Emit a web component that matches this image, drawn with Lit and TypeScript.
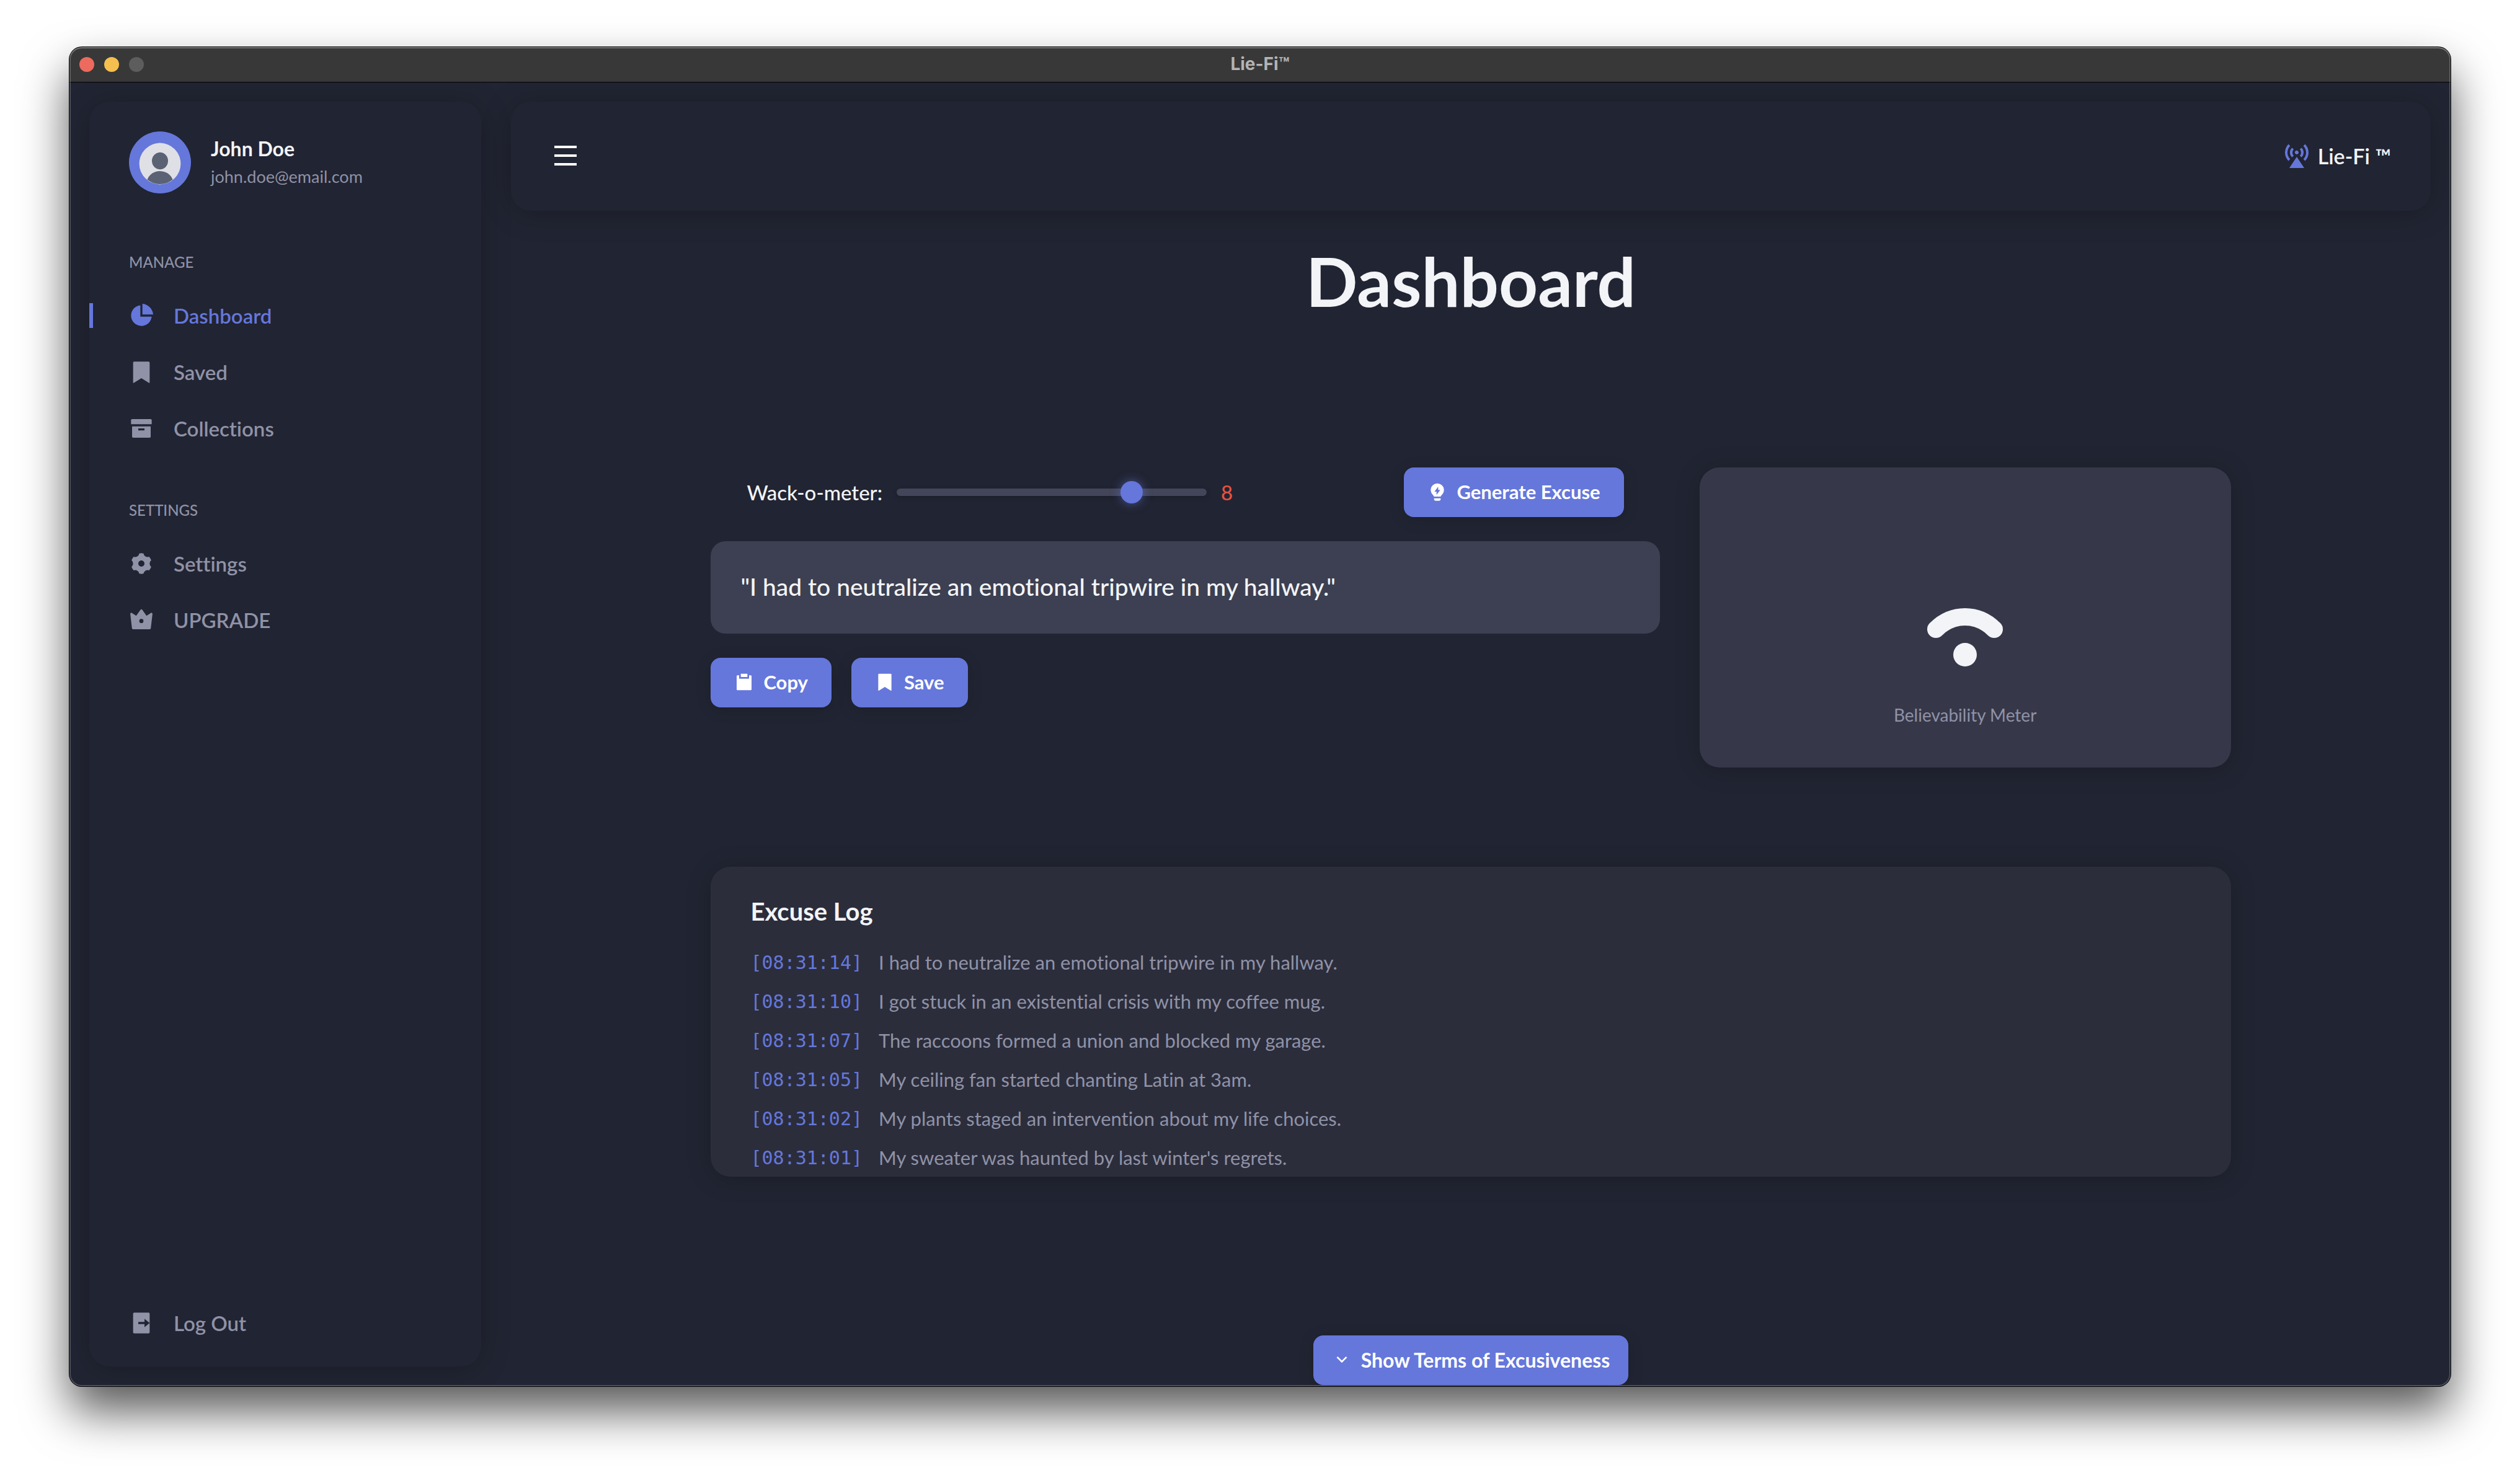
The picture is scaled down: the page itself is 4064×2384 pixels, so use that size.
import { LitElement, html, css, svg } from "lit";
import { customElement, property, state } from "lit/decorators.js";
import { classMap } from "lit/directives/class-map.js";

const ICONS: Record<string, string> = {
  dashboard:
    "M11 2.05V13h10.95c-.501 5.053-4.765 9-9.95 9-5.523 0-10-4.477-10-10 0-5.185 3.947-9.449 9-9.95zm2-1.507C18.553 1.02 22.979 5.447 23.457 11H13V.543z",
  bookmark:
    "M5 2h14a1 1 0 0 1 1 1v19.143a.5.5 0 0 1-.766.424L12 18.03l-7.234 4.536A.5.5 0 0 1 4 22.143V3a1 1 0 0 1 1-1z",
  archive:
    "M3 10h18v10.004c0 .55-.445.996-.993.996H3.993A.994.994 0 0 1 3 20.004V10zm6 2v2h6v-2H9zM2 4c0-.552.455-1 .992-1h18.016c.548 0 .992.444.992 1v4H2V4z",
  settings:
    "M9.954 2.21a9.99 9.99 0 0 1 4.091-.002A3.993 3.993 0 0 0 16 5.07a3.993 3.993 0 0 0 3.457.261A9.99 9.99 0 0 1 21.5 8.876 3.993 3.993 0 0 0 20 12c0 1.264.586 2.391 1.502 3.124a10.043 10.043 0 0 1-2.046 3.543 3.993 3.993 0 0 0-3.456.261 3.993 3.993 0 0 0-1.954 2.86 9.99 9.99 0 0 1-4.091.004A3.993 3.993 0 0 0 8 18.927a3.993 3.993 0 0 0-3.457-.26A9.99 9.99 0 0 1 2.5 15.121 3.993 3.993 0 0 0 4 12a3.993 3.993 0 0 0-1.502-3.124 10.043 10.043 0 0 1 2.046-3.543A3.993 3.993 0 0 0 8 5.071a3.993 3.993 0 0 0 1.954-2.86zM12 15a3 3 0 1 0 0-6 3 3 0 0 0 0 6z",
  crown:
    "M2.8 5.2L7 8l4.186-5.86a1 1 0 0 1 1.628 0L17 8l4.2-2.8a1 1 0 0 1 1.547.95l-1.643 13.967a1 1 0 0 1-.993.883H3.889a1 1 0 0 1-.993-.883L1.253 6.149A1 1 0 0 1 2.8 5.2zM12 15a2 2 0 1 0 0-4 2 2 0 0 0 0 4z",
  logout:
    "M5 22a1 1 0 0 1-1-1V3a1 1 0 0 1 1-1h14a1 1 0 0 1 1 1v18a1 1 0 0 1-1 1H5zm10-6l5-4-5-4v3H9v2h6v3z",
  menu: "M3 4h18v2H3V4zm0 7h18v2H3v-2zm0 7h18v2H3v-2z",
  station:
    "M12 13l6 9H6l6-9zm-1.06-2.44a1.5 1.5 0 1 1 2.12-2.12 1.5 1.5 0 0 1-2.12 2.12zM5.281 2.783l1.415 1.415a7.5 7.5 0 0 0 0 10.606l-1.415 1.415a9.5 9.5 0 0 1 0-13.436zm13.436 0a9.5 9.5 0 0 1 0 13.436l-1.415-1.415a7.5 7.5 0 0 0 0-10.606l1.415-1.415zM8.11 5.611l1.414 1.414a3.5 3.5 0 0 0 0 4.95l-1.414 1.414a5.5 5.5 0 0 1 0-7.778zm7.778 0a5.5 5.5 0 0 1 0 7.778l-1.414-1.414a3.5 3.5 0 0 0 0-4.95l1.414-1.414z",
  bulb:
    "M7.941 18c-.297-1.273-1.637-2.314-2.187-3a8 8 0 1 1 12.49.002c-.55.685-1.888 1.726-2.185 2.998H7.94zM16 20v1a2 2 0 0 1-2 2h-4a2 2 0 0 1-2-2v-1h8zm-3-9.995V6l-4.5 6.005H11v4l4.5-6H13z",
  clipboard:
    "M6 4v4h12V4h2.007c.548 0 .993.445.993.993v16.014a.994.994 0 0 1-.993.993H3.993A.994.994 0 0 1 3 21.007V4.993C3 4.445 3.445 4 3.993 4H6zm2-2h8v4H8V2z",
  chevron:
    "M12 13.172l4.95-4.95 1.414 1.414L12 16 5.636 9.636 7.05 8.222z",
};

@customElement("lf-icon")
class LfIcon extends LitElement {
  @property() name = "menu";

  static styles = css`
    :host {
      display: block;
      flex: none;
      width: 40px;
      height: 40px;
    }
    .glyph {
      display: block;
      width: 100%;
      height: 100%;
      fill: currentColor;
    }
  `;

  render() {
    return html`<svg class="glyph" viewBox="0 0 24 24" aria-hidden="true">
      ${svg`<path d=${ICONS[this.name]}></path>`}
    </svg>`;
  }
}

interface NavItem {
  icon: string;
  label: string;
}

@customElement("lf-sidebar")
class LfSidebar extends LitElement {
  @state() private active = "Dashboard";

  private sections: { title: string; items: NavItem[] }[] = [
    {
      title: "MANAGE",
      items: [
        { icon: "dashboard", label: "Dashboard" },
        { icon: "bookmark", label: "Saved" },
        { icon: "archive", label: "Collections" },
      ],
    },
    {
      title: "SETTINGS",
      items: [
        { icon: "settings", label: "Settings" },
        { icon: "crown", label: "UPGRADE" },
      ],
    },
  ];

  static styles = css`
    :host {
      display: flex;
      flex-direction: column;
      box-sizing: border-box;
      padding: 48px 0 24px;
      border-radius: 32px;
      background: #212432;
      box-shadow: 0 4px 48px rgba(0, 0, 0, 0.22);
      color: #9092a7;
    }
    .profile {
      display: flex;
      align-items: center;
      gap: 32px;
      padding: 0 64px;
    }
    .avatar {
      display: block;
      width: 100px;
      height: 100px;
    }
    .name {
      margin: 0;
      font-size: 32px;
      line-height: 46px;
      font-weight: 700;
      color: #f3f4f7;
    }
    .email {
      margin: 0;
      font-size: 27px;
      line-height: 44px;
    }
    .nav {
      display: flex;
      flex-direction: column;
      gap: 70px;
      margin-top: 95px;
    }
    .heading {
      margin: 0 64px 25px;
      font-size: 24px;
      line-height: 32px;
      font-weight: 500;
    }
    .list {
      margin: 0;
      padding: 0;
      list-style: none;
    }
    .item {
      display: flex;
      align-items: center;
      box-sizing: border-box;
      height: 91px;
      padding-bottom: 2px;
      color: inherit;
      font-size: 33px;
      font-weight: 600;
      text-decoration: none;
    }
    .item::before {
      content: "";
      width: 6px;
      height: 40px;
      margin-right: 58px;
    }
    .item.active {
      color: #6577db;
    }
    .item.active::before {
      background: #6577db;
    }
    .item lf-icon {
      margin-right: 32px;
    }
    .logout {
      margin-top: auto;
    }
  `;

  private select(event: Event, label: string) {
    event.preventDefault();
    this.active = label;
  }

  render() {
    return html`
      <div class="profile">
        <svg class="avatar" viewBox="0 0 100 100" role="img" aria-label="Profile picture">
          <defs>
            <clipPath id="face"><circle cx="50" cy="52" r="33"></circle></clipPath>
          </defs>
          <circle cx="50" cy="50" r="50" fill="#6577db"></circle>
          <circle cx="50" cy="52" r="33.4" fill="#dfe0e6"></circle>
          <g clip-path="url(#face)" fill="#5a6273">
            <ellipse cx="50" cy="47.5" rx="13" ry="13.7"></ellipse>
            <ellipse cx="50" cy="84" rx="21.5" ry="20"></ellipse>
          </g>
        </svg>
        <div>
          <p class="name">John Doe</p>
          <p class="email">john.doe@email.com</p>
        </div>
      </div>
      <nav class="nav">
        ${this.sections.map(
          (section) => html`<section>
            <h2 class="heading">${section.title}</h2>
            <ul class="list">
              ${section.items.map(
                (item) => html`<li>
                  <a
                    class=${classMap({ item: true, active: item.label === this.active })}
                    href="#${item.label.toLowerCase()}"
                    @click=${(e: Event) => this.select(e, item.label)}
                    ><lf-icon name=${item.icon}></lf-icon>${item.label}</a
                  >
                </li>`
              )}
            </ul>
          </section>`
        )}
      </nav>
      <a class="item logout" href="#logout"><lf-icon name="logout"></lf-icon>Log Out</a>
    `;
  }
}

@customElement("lf-button")
class LfButton extends LitElement {
  @property() icon = "";

  static styles = css`
    :host {
      display: block;
    }
    .button {
      display: flex;
      align-items: center;
      gap: 15px;
      height: 80px;
      padding: 0 38px 2px;
      border: 0;
      border-radius: 16px;
      background: #6577db;
      box-shadow: 0 4px 24px rgba(0, 0, 0, 0.15);
      color: #ffffff;
      font: inherit;
      font-size: 31px;
      font-weight: 700;
      white-space: nowrap;
      cursor: pointer;
    }
    .button lf-icon {
      width: 32px;
      height: 32px;
    }
    :host([wide]) .button {
      padding: 0 30px 2px;
      font-size: 32px;
    }
  `;

  render() {
    return html`<button class="button" type="button">
      <lf-icon name=${this.icon}></lf-icon><slot></slot>
    </button>`;
  }
}

@customElement("lf-dashboard")
class LfDashboard extends LitElement {
  @state() private level = 8;

  private log = [
    { time: "08:31:14", text: "I had to neutralize an emotional tripwire in my hallway." },
    { time: "08:31:10", text: "I got stuck in an existential crisis with my coffee mug." },
    { time: "08:31:07", text: "The raccoons formed a union and blocked my garage." },
    { time: "08:31:05", text: "My ceiling fan started chanting Latin at 3am." },
    { time: "08:31:02", text: "My plants staged an intervention about my life choices." },
    { time: "08:31:01", text: "My sweater was haunted by last winter's regrets." },
  ];

  static styles = css`
    :host {
      display: flex;
      flex-direction: column;
      align-items: center;
      padding: 48px 16px 0;
      color: #f3f4f7;
    }
    .title {
      margin: 0;
      font-size: 110px;
      line-height: 128px;
      font-weight: 700;
    }
    .column {
      width: 80%;
      margin-top: 238px;
    }
    .top {
      display: grid;
      grid-template-columns: 25fr 14fr;
      gap: 64px;
      align-items: start;
    }
    .maker {
      display: flex;
      flex-direction: column;
      gap: 39px;
    }
    .controls {
      display: flex;
      align-items: center;
      justify-content: space-between;
      padding: 0 58px;
    }
    .wack {
      display: flex;
      align-items: center;
      gap: 23px;
      font-size: 33px;
      font-weight: 500;
    }
    .slider {
      appearance: none;
      width: 500px;
      height: 36px;
      margin: 0;
      background: transparent;
    }
    .slider::-webkit-slider-runnable-track {
      height: 12px;
      border-radius: 6px;
      background: #434659;
      box-shadow: 0 2px 8px rgba(0, 0, 0, 0.2);
    }
    .slider::-webkit-slider-thumb {
      appearance: none;
      width: 36px;
      height: 36px;
      margin-top: -12px;
      border-radius: 50%;
      background: #6577db;
      box-shadow: 0 0 16px rgba(101, 119, 219, 0.6);
    }
    .level {
      color: #e5513f;
    }
    .quote {
      display: flex;
      align-items: center;
      box-sizing: border-box;
      min-height: 149px;
      margin: 0;
      padding: 0 48px 4px;
      border-radius: 24px;
      background: #3c4052;
      font-size: 39px;
      font-weight: 500;
    }
    .actions {
      display: flex;
      gap: 32px;
    }
    .meter {
      display: flex;
      flex-direction: column;
      align-items: center;
      justify-content: flex-end;
      gap: 50px;
      box-sizing: border-box;
      height: 484px;
      padding-bottom: 65px;
      border-radius: 32px;
      background: #363849;
      box-shadow: 0 4px 40px rgba(0, 0, 0, 0.2);
      font-size: 28px;
      line-height: 40px;
      color: #9092a7;
    }
    .wifi {
      display: block;
      width: 128px;
      height: 112px;
    }
    .log {
      box-sizing: border-box;
      height: 500px;
      margin-top: 160px;
      padding: 48px 64px 0;
      border-radius: 32px;
      overflow: hidden;
      background: #2b2d3b;
      box-shadow: 0 4px 40px rgba(0, 0, 0, 0.2);
    }
    .log-title {
      margin: 0;
      font-size: 40px;
      line-height: 48px;
      font-weight: 700;
    }
    .entries {
      margin: 27px 0 0;
      padding: 0;
      list-style: none;
    }
    .entry {
      display: flex;
      align-items: center;
      gap: 26px;
      font-size: 31px;
      line-height: 63px;
      color: #9092a7;
    }
    .time {
      font-family: "DejaVu Sans Mono", monospace;
      font-size: 30px;
      color: #6577db;
    }
    .terms {
      margin-top: 256px;
    }
  `;

  render() {
    return html`
      <h1 class="title">Dashboard</h1>
      <div class="column">
        <div class="top">
          <section class="maker">
            <div class="controls">
              <div class="wack">
                <label for="wack">Wack-o-meter:</label>
                <input
                  class="slider"
                  id="wack"
                  type="range"
                  min="1"
                  max="10"
                  .value=${String(this.level)}
                  @input=${(e: Event) =>
                    (this.level = Number((e.target as HTMLInputElement).value))}
                />
                <output class="level" for="wack">${this.level}</output>
              </div>
              <lf-button icon="bulb">Generate Excuse</lf-button>
            </div>
            <p class="quote">"${this.log[0].text}"</p>
            <div class="actions">
              <lf-button icon="clipboard">Copy</lf-button>
              <lf-button icon="bookmark">Save</lf-button>
            </div>
          </section>
          <section class="meter">
            <svg class="wifi" viewBox="0 0 128 112" aria-hidden="true">
              <path
                d="M17 44C30 31 46 24 64 24s34 7 47 20"
                fill="none"
                stroke="#f3f4f7"
                stroke-width="28"
                stroke-linecap="round"
              ></path>
              <circle cx="64" cy="85" r="19" fill="#f3f4f7"></circle>
            </svg>
            <span>Believability Meter</span>
          </section>
        </div>
        <section class="log">
          <h2 class="log-title">Excuse Log</h2>
          <ol class="entries">
            ${this.log.map(
              (entry) => html`<li class="entry">
                <time class="time">[${entry.time}]</time><span>${entry.text}</span>
              </li>`
            )}
          </ol>
        </section>
      </div>
      <lf-button class="terms" icon="chevron" wide>Show Terms of Excusiveness</lf-button>
    `;
  }
}

@customElement("app-root")
class AppRoot extends LitElement {
  static styles = css`
    :host {
      display: flex;
      box-sizing: border-box;
      min-height: 100vh;
      padding: 76px 112px 148px;
      background: #ffffff;
      font-family: Lato, "Open Sans", sans-serif;
      font-variant-ligatures: none;
    }
    .window {
      position: relative;
      display: flex;
      flex: 1;
      flex-direction: column;
      min-width: 0;
      border-radius: 20px;
      background: #212432;
      box-shadow: 0 0 0 1px #000000, 0 40px 76px rgba(0, 0, 0, 0.66);
      overflow: hidden;
    }
    .window::after {
      content: "";
      position: absolute;
      inset: 0;
      border-radius: 20px;
      box-shadow: inset 0 2px rgba(255, 255, 255, 0.16), inset 0 0 0 2px rgba(255, 255, 255, 0.2);
      pointer-events: none;
      z-index: 2;
    }
    .titlebar {
      position: relative;
      display: grid;
      grid-template-columns: 1fr auto 1fr;
      align-items: center;
      height: 56px;
      padding: 0 16px;
      background: #383838;
      box-shadow: 0 1px #000000;
      z-index: 1;
    }
    .lights {
      display: flex;
      gap: 16px;
    }
    .light {
      width: 24px;
      height: 24px;
      padding: 0;
      border: 0;
      border-radius: 50%;
      background: #5d5d5d;
    }
    .light.close {
      background: #ed6a5e;
    }
    .light.minimize {
      background: #f5bf4f;
    }
    .caption {
      padding-bottom: 2px;
      font-family: Inter, sans-serif;
      font-size: 28px;
      line-height: 32px;
      font-weight: 700;
      color: #b4b4b4;
    }
    .body {
      display: flex;
      flex: 1;
      gap: 48px;
      padding: 32px 32px 0;
    }
    .sidebar {
      flex: none;
      width: 632px;
      margin-bottom: 32px;
    }
    .main {
      flex: 1;
      min-width: 0;
    }
    .topbar {
      display: flex;
      align-items: center;
      justify-content: space-between;
      box-sizing: border-box;
      height: 176px;
      padding: 0 64px 2px;
      border-radius: 32px;
      background: #212432;
      box-shadow: 0 4px 48px rgba(0, 0, 0, 0.22);
      color: #f3f4f7;
    }
    .menu {
      padding: 0;
      border: 0;
      background: transparent;
      color: #ffffff;
    }
    .menu lf-icon,
    .brand lf-icon {
      width: 48px;
      height: 48px;
    }
    .brand {
      display: flex;
      align-items: center;
      gap: 10px;
      color: inherit;
      font-size: 34px;
      font-weight: 600;
      text-decoration: none;
    }
    .brand lf-icon {
      color: #6577db;
    }
  `;

  render() {
    return html`
      <div class="window">
        <header class="titlebar">
          <div class="lights">
            <button class="light close" aria-label="Close"></button>
            <button class="light minimize" aria-label="Minimize"></button>
            <button class="light" aria-label="Zoom" disabled></button>
          </div>
          <span class="caption">Lie-Fi™</span>
        </header>
        <div class="body">
          <lf-sidebar class="sidebar"></lf-sidebar>
          <main class="main">
            <header class="topbar">
              <button class="menu" aria-label="Toggle menu"><lf-icon name="menu"></lf-icon></button>
              <a class="brand" href="#home"><lf-icon name="station"></lf-icon>Lie-Fi ™</a>
            </header>
            <lf-dashboard></lf-dashboard>
          </main>
        </div>
      </div>
    `;
  }
}
